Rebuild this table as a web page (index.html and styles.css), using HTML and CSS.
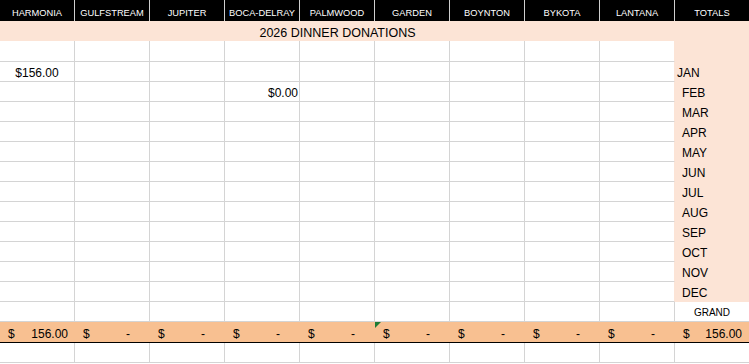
FILE: index.html
```html
<!DOCTYPE html>
<html>
<head>
<meta charset="utf-8">
<link rel="stylesheet" href="styles.css">
</head>
<body>
<div class="sheet">
  <div class="row hdr">
    <div class="c">HARMONIA</div><div class="c">GULFSTREAM</div><div class="c">JUPITER</div><div class="c">BOCA-DELRAY</div><div class="c">PALMWOOD</div><div class="c">GARDEN</div><div class="c">BOYNTON</div><div class="c">BYKOTA</div><div class="c">LANTANA</div><div class="c last">TOTALS</div>
  </div>
  <div class="row title">
    <div class="tcell">2026 DINNER DONATIONS</div><div class="c"></div>
  </div>
  <div class="row r first">
    <div class="c"></div><div class="c"></div><div class="c"></div><div class="c"></div><div class="c"></div><div class="c"></div><div class="c"></div><div class="c"></div><div class="c pb"></div><div class="c m"></div>
  </div>
  <div class="row r">
    <div class="c center">$156.00</div><div class="c"></div><div class="c"></div><div class="c"></div><div class="c"></div><div class="c"></div><div class="c"></div><div class="c"></div><div class="c pb"></div><div class="c m jan">JAN</div>
  </div>
  <div class="row r">
    <div class="c"></div><div class="c"></div><div class="c"></div><div class="c right">$0.00</div><div class="c"></div><div class="c"></div><div class="c"></div><div class="c"></div><div class="c pb"></div><div class="c m">FEB</div>
  </div>
  <div class="row r"><div class="c"></div><div class="c"></div><div class="c"></div><div class="c"></div><div class="c"></div><div class="c"></div><div class="c"></div><div class="c"></div><div class="c pb"></div><div class="c m">MAR</div></div>
  <div class="row r"><div class="c"></div><div class="c"></div><div class="c"></div><div class="c"></div><div class="c"></div><div class="c"></div><div class="c"></div><div class="c"></div><div class="c pb"></div><div class="c m">APR</div></div>
  <div class="row r"><div class="c"></div><div class="c"></div><div class="c"></div><div class="c"></div><div class="c"></div><div class="c"></div><div class="c"></div><div class="c"></div><div class="c pb"></div><div class="c m">MAY</div></div>
  <div class="row r"><div class="c"></div><div class="c"></div><div class="c"></div><div class="c"></div><div class="c"></div><div class="c"></div><div class="c"></div><div class="c"></div><div class="c pb"></div><div class="c m">JUN</div></div>
  <div class="row r"><div class="c"></div><div class="c"></div><div class="c"></div><div class="c"></div><div class="c"></div><div class="c"></div><div class="c"></div><div class="c"></div><div class="c pb"></div><div class="c m">JUL</div></div>
  <div class="row r"><div class="c"></div><div class="c"></div><div class="c"></div><div class="c"></div><div class="c"></div><div class="c"></div><div class="c"></div><div class="c"></div><div class="c pb"></div><div class="c m">AUG</div></div>
  <div class="row r"><div class="c"></div><div class="c"></div><div class="c"></div><div class="c"></div><div class="c"></div><div class="c"></div><div class="c"></div><div class="c"></div><div class="c pb"></div><div class="c m">SEP</div></div>
  <div class="row r"><div class="c"></div><div class="c"></div><div class="c"></div><div class="c"></div><div class="c"></div><div class="c"></div><div class="c"></div><div class="c"></div><div class="c pb"></div><div class="c m">OCT</div></div>
  <div class="row r"><div class="c"></div><div class="c"></div><div class="c"></div><div class="c"></div><div class="c"></div><div class="c"></div><div class="c"></div><div class="c"></div><div class="c pb"></div><div class="c m">NOV</div></div>
  <div class="row r"><div class="c"></div><div class="c"></div><div class="c"></div><div class="c"></div><div class="c"></div><div class="c"></div><div class="c"></div><div class="c"></div><div class="c pb"></div><div class="c m">DEC</div></div>
  <div class="row r"><div class="c"></div><div class="c"></div><div class="c"></div><div class="c"></div><div class="c"></div><div class="c"></div><div class="c"></div><div class="c"></div><div class="c"></div><div class="c grand">GRAND</div></div>
  <div class="row tot">
    <div class="c val"><span>$</span><span>156.00</span></div>
    <div class="c dash"><span>$</span><span>-</span></div>
    <div class="c dash"><span>$</span><span>-</span></div>
    <div class="c dash"><span>$</span><span>-</span></div>
    <div class="c dash"><span>$</span><span>-</span></div>
    <div class="c dash flag"><span>$</span><span>-</span></div>
    <div class="c dash"><span>$</span><span>-</span></div>
    <div class="c dash"><span>$</span><span>-</span></div>
    <div class="c dash"><span>$</span><span>-</span></div>
    <div class="c val"><span>$</span><span>156.00</span></div>
  </div>
  <div class="row r"><div class="c"></div><div class="c"></div><div class="c"></div><div class="c"></div><div class="c"></div><div class="c"></div><div class="c"></div><div class="c"></div><div class="c"></div><div class="c"></div></div>
</div>
</body>
</html>
```
FILE: styles.css
```css
* { box-sizing: border-box; }
html, body { margin: 0; padding: 0; background: #fff; }
body {
  font-family: "Liberation Sans", Arial, sans-serif;
  font-size: 12px;
  color: #000;
  width: 749px;
  height: 364px;
  overflow: hidden;
}
.sheet { display: flex; flex-direction: column; }
.row {
  display: grid;
  grid-template-columns: repeat(9, 75px) 74px;
}
.hdr {
  height: 21px;
  background: #000;
  color: #fff;
  font-size: 9.3px;
  line-height: 11px;
}
.hdr .c {
  border-right: 1px solid #cfcfcf;
  display: flex;
  align-items: flex-end;
  justify-content: center;
  padding-bottom: 2px;
}
.hdr .c.last { border-right: none; }
.title {
  height: 20px;
  background: #fce4d6;
  font-size: 12.5px;
  line-height: 14px;
}
.tcell {
  grid-column: 1 / span 9;
  display: flex;
  align-items: flex-end;
  justify-content: center;
  padding-bottom: 1px;
}
.r { height: 20px; }
.r.first { height: 21px; }
.r .c {
  border-right: 1px solid #d4d4d4;
  border-bottom: 1px solid #d4d4d4;
  display: flex;
  align-items: flex-end;
  line-height: 14px;
  padding-bottom: 1px;
  white-space: nowrap;
}
.r .c:last-child { border-right: none; }
.r .c.pb { border-right-color: #fce4d6; }
.r .c.m {
  background: #fce4d6;
  border-bottom-color: #fce4d6;
  padding-left: 7px;
}
.r .c.m.jan { padding-left: 2px; }
.r .c.center { justify-content: center; }
.r .c.right { justify-content: flex-end; padding-right: 1px; }
.r .c.grand {
  justify-content: center;
  font-size: 10px;
  line-height: 12px;
  padding-bottom: 2px;
}
.tot {
  height: 21px;
  background: #f8c091;
  border-bottom: 1px solid #000;
}
.tot .c {
  display: flex;
  align-items: flex-end;
  justify-content: space-between;
  line-height: 14px;
  padding-bottom: 1px;
  padding-left: 8px;
  position: relative;
}
.tot .c.val { padding-right: 7px; }
.tot .c.dash { padding-right: 20px; }
.tot .c.flag::before {
  content: "";
  position: absolute;
  left: 0;
  top: 0;
  width: 0;
  height: 0;
  border-top: 6px solid #1e7b34;
  border-right: 6px solid transparent;
}
```
